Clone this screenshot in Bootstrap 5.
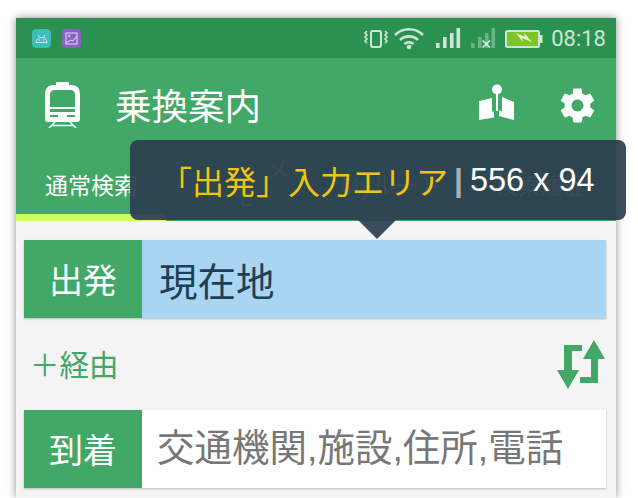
<!doctype html>
<html lang="ja">
<head>
<meta charset="utf-8">
<link href="https://cdn.jsdelivr.net/npm/bootstrap@5.3.0/dist/css/bootstrap.min.css" rel="stylesheet">
<style>
html,body{height:498px;overflow:hidden;background:#fff}
body{font-family:"Noto Sans CJK JP","Liberation Sans",sans-serif;position:relative}
.screen{width:600px;height:480px;margin:18px 0 0 16px;background:#f4f4f4;box-shadow:0 0 8px rgba(0,0,0,.45);overflow:hidden}
.statusbar{height:40px;background:#2b9151;padding:0 10px 0 16px}
.appicon{width:19px;height:19px;border-radius:4px;display:block}
.appicongap{margin-left:11px}
.clock{font:22px Roboto,sans-serif;color:#cfe6d6;margin-left:4px}
.appbar{height:163px;background:#42a868;color:#fff}
.toprow{height:97px;padding:0 18px 0 29px}
.trainicon{margin-top:-4px}
.apptitle{font-size:36.5px;line-height:1;margin-left:34px;padding-bottom:3px}
.gearicon{margin-left:43px;margin-top:-2px}
.mapicon{margin-top:-8px}
.tabs{height:59px}
.tabitem{width:150px;font-size:23px;color:#fff;line-height:1;text-align:center;position:relative;white-space:nowrap}
.tabfaint{color:rgba(255,255,255,.85)}
.tabmark{position:absolute;top:-16px;left:100px}
.tabmark2{position:absolute;top:11px;left:66px}
.limebar{height:7px;width:150px;background:#d4fb66}
.fieldrow{height:78px;margin:0 10px 0 8px;background:#fff;box-shadow:0 1px 2px rgba(0,0,0,.25)}
.fieldlabel{width:118px;background:#42a868;color:#fff;font-size:34px;line-height:1}
.fieldvalue{font-size:38.5px;line-height:1;padding-left:17px;color:#1d3f57}
.fieldfilled{background:#a9d5f2}
.fieldempty{color:#777;font-family:"Liberation Sans","Noto Sans CJK JP",sans-serif;font-size:37.5px;padding-left:15px}
.firstrow{margin-top:19px}
.viarow{height:92px;padding:0 10px 0 14px;color:#42a868;font-size:29.500px;line-height:1}
.measure{position:absolute;left:130px;top:140px;width:496px;height:80px;background:rgba(44,62,80,.93);border-radius:8px;color:#fff;padding:0 0 0 30px}
.measure::after{content:"";position:absolute;left:228px;top:80px;border-style:solid;border-width:19px 19.5px 0;border-color:rgba(44,62,80,.93) transparent transparent}
.measurename{color:#f1c40f;font-size:32px;line-height:1;white-space:nowrap}
.measurebar{color:#aab1b7;font:bold 32px "Liberation Sans",sans-serif;margin:0 7px 0 6px}
.measuresize{font:32.500px "Liberation Sans",sans-serif;white-space:nowrap}
</style>
</head>
<body>
<div class="screen">
  <div class="statusbar d-flex align-items-center">
    <svg class="appicon" viewBox="0 0 19 19"><rect width="19" height="19" rx="4" fill="#3dbdb5"/><path d="M4 13.500a5.500 5 0 0 1 11 0zM6 6l1.500 2.500M13 6l-1.500 2.500" fill="none" stroke="#c9eee9" stroke-width="1"/><circle cx="7.300" cy="11" r=".7" fill="#c9eee9"/><circle cx="11.700" cy="11" r=".7" fill="#c9eee9"/></svg>
    <svg class="appicon appicongap me-auto" viewBox="0 0 19 19"><rect width="19" height="19" rx="4" fill="#8a63c2"/><rect x="4" y="4" width="11" height="11" fill="none" stroke="#e6dcf5" stroke-width="1"/><circle cx="7" cy="7" r="1" fill="none" stroke="#e6dcf5" stroke-width=".8"/><path d="M4 14l5-3 2 1 4-5" fill="none" stroke="#e6dcf5" stroke-width="1"/></svg>
    <svg width="190" height="30" viewBox="0 0 190 30" class="flex-shrink-0">
      <g fill="none" stroke="#cfe6d6" stroke-width="2">
        <rect x="14" y="8" width="10" height="16" rx="2"/>
        <path d="M10 8l-2 2 2 2-2 2 2 2-2 2 2 2M28 8l2 2-2 2 2 2-2 2 2 2-2 2" stroke-width="1.600"/>
        <path d="M38 12a20 20 0 0 1 28 0M43 17a13 13 0 0 1 18 0M47.500 21a7 7 0 0 1 9 0" stroke-width="2.600"/>
      </g>
      <circle cx="52" cy="24" r="2.300" fill="#cfe6d6"/>
      <g fill="#cfe6d6">
        <rect x="79" y="20" width="3.600" height="5"/><rect x="86" y="14" width="3.600" height="11"/><rect x="93" y="10" width="3.600" height="15"/><rect x="99.500" y="5" width="3.600" height="20"/>
      </g>
      <g fill="#cfe6d6" opacity=".4">
        <rect x="114" y="20" width="3.600" height="5"/><rect x="121" y="14" width="3.600" height="11"/><rect x="128" y="10" width="3.600" height="15"/><rect x="134.500" y="5" width="3.600" height="20"/>
      </g>
      <path d="M125.500 17.500l7.500 7m0-7l-7.500 7" stroke="#e3f0e7" stroke-width="1.600"/>
      <rect x="149" y="8" width="33" height="16" rx="1.500" fill="#7ec628" stroke="#cfe6d6" stroke-width="2"/>
      <rect x="183" y="12" width="2.500" height="8" fill="#cfe6d6"/>
      <path d="M159 10l9 4-1-4 8 9-10-4 1 4z" fill="#e8f4dc"/>
    </svg>
    <span class="clock">08:18</span>
  </div>
  <div class="appbar">
    <div class="toprow d-flex align-items-center">
      <svg class="trainicon flex-shrink-0" width="36" height="46" viewBox="0 0 36 46">
        <rect x="11" y="0" width="13" height="4" rx="1" fill="#fff"/>
        <path d="M0 12q0-9 9-9h17q9 0 9 9v25q0 3-3 3H3q-3 0-3-3z" fill="#fff"/>
        <path d="M5 13q0-5 5-5h15q5 0 5 5v12H5z" fill="#42a868"/>
        <path d="M5 27h25v3H5zM5 33h8v2H5zM22 33h8v2H22z" fill="#42a868"/>
        <path d="M10 40l-6 6M25 40l6 6M6 43.500h23" fill="none" stroke="#fff" stroke-width="1.600"/>
      </svg>
      <span class="apptitle me-auto">乗換案内</span>
      <svg class="mapicon flex-shrink-0" width="35" height="37" viewBox="0 0 35 37">
        <circle cx="18" cy="5.500" r="5" fill="#fff"/>
        <path d="M17 9h2v18h-2z" fill="#fff"/>
        <path d="M0 17l13-3v14l2-.5v6L0 36zM23 13l12 5v18l-15-4v-5.500l3 .5z" fill="#fff"/>
      </svg>
      <svg class="gearicon flex-shrink-0" width="41" height="41" viewBox="0 0 24 24">
        <path fill="#fff" d="M19.430 12.980c.04-.32.07-.64.07-.98s-.03-.66-.07-.98l2.110-1.650c.19-.15.24-.42.12-.64l-2-3.460c-.12-.22-.39-.3-.61-.22l-2.490 1c-.52-.4-1.080-.73-1.690-.98l-.38-2.650C14.460 2.180 14.250 2 14 2h-4c-.25 0-.46.18-.49.42l-.38 2.650c-.61.25-1.170.59-1.690.98l-2.490-1c-.23-.09-.49 0-.61.22l-2 3.460c-.13.22-.07.49.12.64l2.110 1.650c-.04.32-.07.65-.07.98s.03.66.07.98l-2.110 1.650c-.19.15-.24.42-.12.64l2 3.460c.12.22.39.3.61.22l2.490-1c.52.4 1.080.73 1.690.98l.38 2.650c.03.24.24.42.49.42h4c.25 0 .46-.18.49-.42l.38-2.650c.61-.25 1.170-.59 1.690-.98l2.490 1c.23.09.49 0 .61-.22l2-3.460c.12-.22.07-.49-.12-.64l-2.110-1.650zM12 15.500c-1.930 0-3.500-1.570-3.500-3.500s1.570-3.500 3.500-3.500 3.500 1.570 3.500 3.500-1.570 3.500-3.500 3.500z"/>
      </svg>
    </div>
    <div class="tabs d-flex align-items-center">
      <span class="tabitem">通常検索</span>
      <span class="tabitem tabfaint"><span class="tabmark">メ</span><span class="tabmark2">モ</span>&nbsp;</span>
      <span class="tabitem tabfaint">Myルート</span>
      <span class="tabitem tabfaint">検索履歴</span>
    </div>
    <div class="limebar"></div>
  </div>
  <div class="fieldrow firstrow d-flex">
    <div class="fieldlabel d-flex align-items-center justify-content-center">出発</div>
    <div class="fieldvalue fieldfilled flex-grow-1 d-flex align-items-center">現在地</div>
  </div>
  <div class="viarow d-flex align-items-center justify-content-between">
    <span>＋経由</span>
    <svg width="50" height="51" viewBox="0 0 50 51">
      <path d="M8 6H26V12H16V31H23L12 50 1 31H8zM38 1L49 20H42V44H24V38H35V20H27z" fill="#42a868"/>
    </svg>
  </div>
  <div class="fieldrow d-flex">
    <div class="fieldlabel d-flex align-items-center justify-content-center">到着</div>
    <div class="fieldvalue fieldempty flex-grow-1 d-flex align-items-center">交通機関,施設,住所,電話</div>
  </div>
</div>
<div class="measure d-flex align-items-center">
  <span class="measurename">「出発」入力エリア</span><span class="measurebar">|</span><span class="measuresize">556 x 94</span>
</div>
<script src="https://cdn.jsdelivr.net/npm/bootstrap@5.3.0/dist/js/bootstrap.bundle.min.js"></script>
</body>
</html>
